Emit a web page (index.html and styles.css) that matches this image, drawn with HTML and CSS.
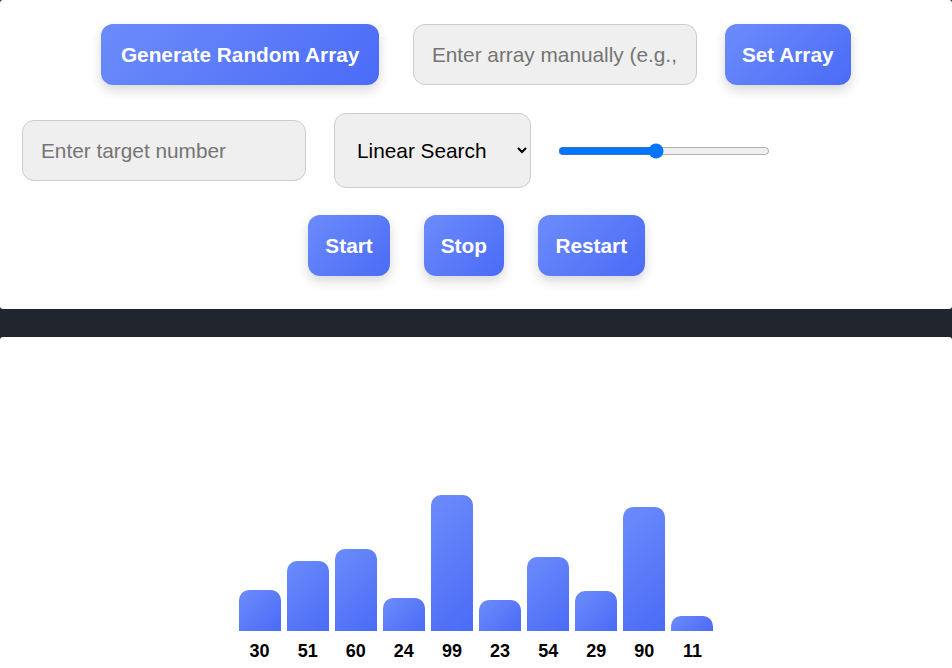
FILE: index.html
```html
<!DOCTYPE html>
<html>
<head>
<meta charset="utf-8">
<link rel="stylesheet" href="styles.css">
</head>
<body>
<div class="panel controls">
  <div class="row row-top">
    <button class="btn btn-gen">Generate Random Array</button>
    <input class="field field-array" type="text" placeholder="Enter array manually (e.g., 5,3,8)">
    <button class="btn">Set Array</button>
  </div>
  <div class="row row-mid">
    <input class="field" type="text" placeholder="Enter target number">
    <select class="algo">
      <option>Linear Search</option>
      <option>Binary Search</option>
    </select>
    <input class="speed" type="range" min="0" max="100" value="46">
  </div>
  <div class="row row-bottom">
    <button class="btn">Start</button>
    <button class="btn">Stop</button>
    <button class="btn btn-restart">Restart</button>
  </div>
</div>
<div class="panel chart">
  <div class="bars">
    <div class="col"><div class="bar" style="height:41px"></div><span class="num">30</span></div>
    <div class="col"><div class="bar" style="height:70px"></div><span class="num">51</span></div>
    <div class="col"><div class="bar" style="height:82px"></div><span class="num">60</span></div>
    <div class="col"><div class="bar" style="height:33px"></div><span class="num">24</span></div>
    <div class="col"><div class="bar" style="height:136px"></div><span class="num">99</span></div>
    <div class="col"><div class="bar" style="height:31px"></div><span class="num">23</span></div>
    <div class="col"><div class="bar" style="height:74px"></div><span class="num">54</span></div>
    <div class="col"><div class="bar" style="height:40px"></div><span class="num">29</span></div>
    <div class="col"><div class="bar" style="height:124px"></div><span class="num">90</span></div>
    <div class="col"><div class="bar" style="height:15px"></div><span class="num">11</span></div>
  </div>
</div>
</body>
</html>
```
FILE: styles.css
```css
html, body {
  margin: 0;
  padding: 0;
}
body {
  background: #21252d;
  font-family: "Liberation Sans", Arial, sans-serif;
  overflow: hidden;
}
.panel {
  background: #ffffff;
  border-radius: 3px;
}
.controls {
  height: 309px;
  box-sizing: border-box;
  padding-top: 24px;
  display: flex;
  flex-direction: column;
}
.row {
  display: flex;
  align-items: center;
}
.row-top {
  justify-content: center;
  gap: 28px;
}
.row-mid {
  margin-top: 28px;
  padding-left: 22px;
  gap: 28px;
}
.row-bottom {
  margin-top: 27px;
  justify-content: center;
  gap: 34px;
  padding-left: 1px;
}
.btn {
  font-family: "Liberation Sans", Arial, sans-serif;
  font-size: 20.8px;
  font-weight: bold;
  line-height: 25px;
  color: #ffffff;
  border: none;
  border-radius: 12px;
  padding: 18px 17px;
  background: linear-gradient(135deg, #6c8cfb 0%, #4a6bf6 100%);
  box-shadow: 0 5px 12px rgba(0, 0, 0, 0.16);
  cursor: pointer;
}
.btn.btn-gen {
  margin-right: 6px;
  padding-left: 19.5px;
  padding-right: 19.5px;
}
.btn.btn-restart {
  padding-left: 17.5px;
  padding-right: 17.5px;
}
.field {
  box-sizing: border-box;
  width: 284px;
  height: 61px;
  padding: 0 18px;
  font-family: "Liberation Sans", Arial, sans-serif;
  font-size: 20.8px;
  color: #222;
  background: #efefef;
  border: 1px solid #cccccc;
  border-radius: 12px;
  outline: none;
}
.field::placeholder {
  color: #757575;
}
.algo {
  box-sizing: border-box;
  width: 197px;
  height: 75px;
  padding: 0 10px 0 18px;
  font-family: "Liberation Sans", Arial, sans-serif;
  font-size: 20.8px;
  color: #000;
  background: #efefef;
  border: 1px solid #cccccc;
  border-radius: 12px;
}
.speed {
  width: 212px;
  margin: 0 0 0 -1px;
  accent-color: #0075ff;
}
.chart {
  margin-top: 28px;
  height: 360px;
  display: flex;
  justify-content: center;
  align-items: flex-start;
}
.bars {
  display: flex;
  align-items: flex-end;
  height: 325px;
}
.col {
  width: 42px;
  margin: 0 3.05px;
  display: flex;
  flex-direction: column;
  align-items: center;
}
.bar {
  width: 42px;
  border-radius: 10px 10px 0 0;
  background: linear-gradient(135deg, #6c8cfb 0%, #4a6bf6 100%);
}
.num {
  margin-top: 10px;
  font-size: 18px;
  line-height: 21px;
  font-weight: bold;
  color: #000;
}
```
